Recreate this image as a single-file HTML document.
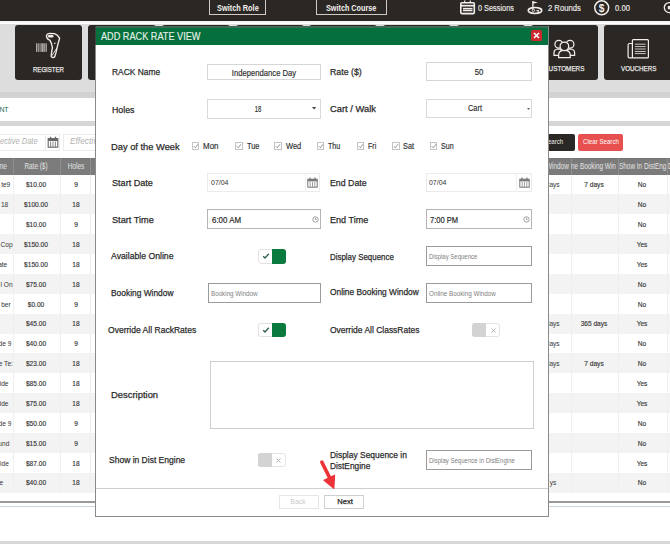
<!DOCTYPE html>
<html><head><meta charset="utf-8"><style>
html,body{margin:0;padding:0;}
body{width:670px;height:544px;overflow:hidden;position:relative;background:#fff;font-family:"Liberation Sans", sans-serif;}
.r{position:absolute;}
.t{position:absolute;white-space:nowrap;line-height:1;}
.s{-webkit-text-stroke:0.25px currentColor;}
</style></head><body>
<div class="r" style="left:0px;top:0px;width:670px;height:544px;background:#fff"></div>
<div class="r" style="left:0px;top:0px;width:670px;height:20.5px;background:#2b2725"></div>
<div class="r" style="left:0px;top:20.6px;width:670px;height:2.6px;background:#f6f6f6"></div>
<div class="r" style="left:0px;top:23.5px;width:670px;height:68px;background:#dddddd"></div>
<div class="r" style="left:0px;top:91.5px;width:670px;height:6.2px;background:#d2d2d2"></div>
<div class="r" style="left:209px;top:-0.6px;width:57.3px;height:15.8px;border:1px solid #cfcac4;box-sizing:border-box"></div>
<div class="t" style="left:216.70px;top:3.52px;font-size:8.6px;color:#f4f2ee;font-weight:bold;transform:scaleX(0.8576);transform-origin:0 0;">Switch Role</div>
<div class="r" style="left:316px;top:-0.6px;width:70.6px;height:15.8px;border:1px solid #cfcac4;box-sizing:border-box"></div>
<div class="t" style="left:326.00px;top:3.52px;font-size:8.6px;color:#f4f2ee;font-weight:bold;transform:scaleX(0.8421);transform-origin:0 0;">Switch Course</div>
<div class="t" style="left:478.00px;top:4.19px;font-size:8.4px;color:#eeebe7;font-weight:normal;transform:scaleX(0.8761);transform-origin:0 0;-webkit-text-stroke:0.15px currentColor">0 Sessions</div>
<div class="t" style="left:547.70px;top:4.19px;font-size:8.4px;color:#eeebe7;font-weight:normal;transform:scaleX(0.9122);transform-origin:0 0;-webkit-text-stroke:0.15px currentColor">2 Rounds</div>
<div class="t" style="left:615.00px;top:4.19px;font-size:8.4px;color:#eeebe7;font-weight:normal;transform:scaleX(0.9175);transform-origin:0 0;-webkit-text-stroke:0.15px currentColor">0.00</div>
<div class="r" style="left:14.6px;top:24.6px;width:67.8px;height:55.9px;background:#2b2725;border-radius:3px"></div>
<div class="r" style="left:88.32px;top:24.6px;width:67.8px;height:55.9px;background:#2b2725;border-radius:3px"></div>
<div class="r" style="left:162.04px;top:24.6px;width:67.8px;height:55.9px;background:#2b2725;border-radius:3px"></div>
<div class="r" style="left:235.76px;top:24.6px;width:67.8px;height:55.9px;background:#2b2725;border-radius:3px"></div>
<div class="r" style="left:309.48px;top:24.6px;width:67.8px;height:55.9px;background:#2b2725;border-radius:3px"></div>
<div class="r" style="left:383.2px;top:24.6px;width:67.8px;height:55.9px;background:#2b2725;border-radius:3px"></div>
<div class="r" style="left:456.92px;top:24.6px;width:67.8px;height:55.9px;background:#2b2725;border-radius:3px"></div>
<div class="r" style="left:530.64px;top:24.6px;width:67.8px;height:55.9px;background:#2b2725;border-radius:3px"></div>
<div class="r" style="left:604.36px;top:24.6px;width:67.8px;height:55.9px;background:#2b2725;border-radius:3px"></div>
<div class="t" style="left:32.70px;top:65.51px;font-size:7.2px;color:#e8e6e3;font-weight:normal;transform:scaleX(0.8423);transform-origin:0 0;-webkit-text-stroke:0.25px currentColor">REGISTER</div>
<div class="t" style="left:544.20px;top:65.41px;font-size:7.2px;color:#e8e6e3;font-weight:normal;transform:scaleX(0.8829);transform-origin:0 0;-webkit-text-stroke:0.25px currentColor">CUSTOMERS</div>
<div class="t" style="left:620.60px;top:65.41px;font-size:7.2px;color:#e8e6e3;font-weight:normal;transform:scaleX(0.8700);transform-origin:0 0;-webkit-text-stroke:0.25px currentColor">VOUCHERS</div>
<svg class="r" style="left:30px;top:30px" width="36" height="30" viewBox="0 0 36 30"><path d="M16.5 6.6C16.3 5 16.8 3.8 19.8 3.4L24.3 3.6C26 4 28.6 6.2 29.6 8.3L28.2 13.2L27 18.2L25.8 23.4L24.6 27C23.5 27.8 22 27.8 21.2 26.2L21.6 22.4L22.4 17.6L21.4 13.4L20 10.4L17.6 8.9Z" fill="none" stroke="#f2efeb" stroke-width="1.35" stroke-linejoin="round"/><rect x="17.9" y="4.9" width="5.6" height="2.5" rx="1.2" fill="#f2efeb"/><circle cx="24.8" cy="13.2" r="0.8" fill="#f2efeb"/><path d="M27 17.8L22 25.6" stroke="#f2efeb" stroke-width="0.9"/><rect x="6.3" y="13.3" width="1.0" height="8.6" fill="#e4e0db"/><rect x="8.3" y="13.3" width="0.6" height="8.6" fill="#e4e0db"/><rect x="9.7" y="13.3" width="0.7" height="8.6" fill="#e4e0db"/><rect x="11.0" y="13.3" width="0.5" height="8.6" fill="#e4e0db"/><rect x="12.1" y="13.3" width="0.7" height="8.6" fill="#e4e0db"/><rect x="13.3" y="13.3" width="0.5" height="8.6" fill="#e4e0db"/><rect x="14.4" y="13.3" width="0.7" height="8.6" fill="#e4e0db"/><rect x="15.7" y="13.3" width="0.9" height="8.6" fill="#e4e0db"/></svg>
<svg class="r" style="left:548px;top:34px" width="30" height="26" viewBox="0 0 30 26"><g fill="#2b2725" stroke="#f2efeb" stroke-width="1.25"><path d="M6 21.4V18.6C6 16.4 7.5 15.2 10 15H13V21.4Z"/><path d="M26.6 21.4V18.6C26.6 16.4 25.1 15.2 22.6 15H19.6V21.4Z"/><circle cx="10.8" cy="10.2" r="3.9"/><circle cx="22" cy="10.2" r="3.9"/><path d="M10.6 23.6V20.8C10.6 17.8 12.8 16.3 16.4 16.3C20 16.3 22.2 17.8 22.2 20.8V23.6Z"/><circle cx="16.4" cy="12.3" r="4.3"/></g></svg>
<svg class="r" style="left:622px;top:34px" width="30" height="26" viewBox="0 0 30 26"><g fill="none" stroke="#f2efeb" stroke-width="1.2"><path d="M10.4 9.5H7.5C6.4 9.5 6.1 10.2 6.1 11V22.6C6.1 23.5 6.6 23.9 7.5 23.9H10.4"/><rect x="10.4" y="5.6" width="16" height="18.3" rx="1"/></g><path d="M12.9 10.2H23.7M12.9 12.6H23.7M12.9 15H23.7M12.9 17.5H23.7M12.9 19.6H23.7" stroke="#dcd8d3" stroke-width="0.9"/></svg>
<svg class="r" style="left:455px;top:0px" width="25" height="18" viewBox="0 0 25 18"><rect x="5.8" y="2.8" width="13.5" height="10.8" rx="1" fill="none" stroke="#f2efeb" stroke-width="1.6"/><path d="M6 5.7H19" stroke="#f2efeb" stroke-width="1.7"/><path d="M8 8.6H17.5M8 10.4H17.5" stroke="#f2efeb" stroke-width="1.1"/><path d="M8 6.9H17.5M8 11.8H17.5" stroke="#8d8985" stroke-width="0.7"/><path d="M9.7 0.5V2.4M15.3 0.5V2.4" stroke="#f2efeb" stroke-width="1.2"/></svg>
<svg class="r" style="left:524px;top:0px" width="22" height="18" viewBox="0 0 22 18"><ellipse cx="11" cy="10.5" rx="6.8" ry="2.9" fill="none" stroke="#f2efeb" stroke-width="1.5"/><path d="M8.9 1V9.6" stroke="#f2efeb" stroke-width="1.3"/><path d="M8.9 1.2L13.9 2.4L8.9 3.8Z" fill="#f2efeb"/><circle cx="9.4" cy="10.4" r="1.2" fill="none" stroke="#f2efeb" stroke-width="0.9"/><path d="M12 11.3C12.6 10.2 14 10.2 14.6 11" fill="none" stroke="#f2efeb" stroke-width="0.9"/><circle cx="14.2" cy="10.9" r="0.9" fill="#f2efeb"/></svg>
<svg class="r" style="left:590px;top:0px" width="24" height="18" viewBox="0 0 24 18"><circle cx="11.7" cy="7.8" r="6.95" fill="none" stroke="#f2efeb" stroke-width="1.5"/><text x="11.7" y="11.6" font-family="Liberation Sans" font-weight="bold" font-size="10.2" text-anchor="middle" fill="#f2efeb">$</text></svg>
<svg class="r" style="left:650px;top:0px" width="20" height="18" viewBox="0 0 20 18"><circle cx="19.3" cy="7.6" r="5" fill="none" stroke="#f2efeb" stroke-width="1.3"/><rect x="17.8" y="6" width="3" height="3.2" fill="#f2efeb"/></svg>
<div class="r" style="left:0px;top:97.7px;width:670px;height:23.3px;background:#fff"></div>
<div class="t" style="left:-0.50px;top:106.27px;font-size:7px;color:#24684c;font-weight:normal;letter-spacing:-0.3px">NT</div>
<div class="r" style="left:0px;top:120.7px;width:670px;height:5.3px;background:#d6d6d6"></div>
<div class="r" style="left:-30px;top:134px;width:90.4px;height:17px;border:1px solid #ececec;box-sizing:border-box;background:#fff"></div>
<div class="r" style="left:44.6px;top:134px;width:0.8px;height:17px;background:#ececec"></div>
<svg class="r" style="left:47px;top:136px" width="12" height="12" viewBox="0 0 12 12"><rect x="1.2" y="2.6" width="9.6" height="8.6" fill="none" stroke="#666" stroke-width="1.1"/><rect x="1.2" y="2.6" width="9.6" height="2.4" fill="#666"/><path d="M3.5 0.8V3.4M8.5 0.8V3.4" stroke="#666" stroke-width="1.3"/><path d="M3.6 5.5V11M6 5.5V11M8.4 5.5V11" stroke="#777" stroke-width="0.9"/></svg>
<div class="r" style="left:63.4px;top:134px;width:40px;height:17px;border:1px solid #ececec;box-sizing:border-box;background:#fff"></div>
<div class="t" style="left:-0.50px;top:138.26px;font-size:8.2px;color:#b0b0b0;font-weight:normal;transform:scaleX(0.9191);transform-origin:0 0;font-style:italic">ective Date</div>
<div class="t" style="left:70.20px;top:138.26px;font-size:8.2px;color:#b0b0b0;font-weight:normal;transform:scaleX(1.0176);transform-origin:0 0;font-style:italic">Effective</div>
<div class="r" style="left:535px;top:134px;width:40px;height:16.8px;background:#2b2725;border-radius:2px"></div>
<div class="t" style="left:547.60px;top:139.01px;font-size:6.6px;color:#f0f0f0;font-weight:normal;transform:scaleX(0.9086);transform-origin:0 0;">earch</div>
<div class="r" style="left:578.2px;top:134px;width:45.2px;height:16.8px;background:#e8504f;border-radius:2px"></div>
<div class="t" style="left:582.70px;top:138.84px;font-size:6.8px;color:#fff;font-weight:normal;transform:scaleX(0.9046);transform-origin:0 0;">Clear Search</div>
<div class="r" style="left:0px;top:157.6px;width:670px;height:17px;background:#7b7b7b"></div>
<div class="r" style="left:0px;top:157.6px;width:670px;height:0.8px;background:#6f757a"></div>
<div class="r" style="left:12.7px;top:157.6px;width:1px;height:17px;background:#8e8e8e"></div>
<div class="r" style="left:59.7px;top:157.6px;width:1px;height:17px;background:#8e8e8e"></div>
<div class="r" style="left:90.3px;top:157.6px;width:1px;height:17px;background:#8e8e8e"></div>
<div class="r" style="left:570.7px;top:157.6px;width:1px;height:17px;background:#8e8e8e"></div>
<div class="r" style="left:618.1px;top:157.6px;width:1px;height:17px;background:#8e8e8e"></div>
<div class="r" style="left:667.2px;top:157.6px;width:1px;height:17px;background:#8e8e8e"></div>
<div class="t" style="left:-1.92px;top:162.86px;font-size:8.2px;color:#e4e4e4;font-weight:normal;transform:scaleX(0.7830);transform-origin:0 0;">me</div>
<div class="t" style="left:-163.80px;width:400px;text-align:center;top:162.86px;font-size:8.2px;color:#e4e4e4;font-weight:normal;transform:scaleX(0.7832);transform-origin:50% 0;">Rate ($)</div>
<div class="t" style="left:-124.45px;width:400px;text-align:center;top:162.86px;font-size:8.2px;color:#e4e4e4;font-weight:normal;transform:scaleX(0.7966);transform-origin:50% 0;">Holes</div>
<div class="t" style="left:546.46px;top:162.86px;font-size:8.2px;color:#e4e4e4;font-weight:normal;transform:scaleX(0.7830);transform-origin:0 0;">Window</div>
<div class="t" style="left:571.10px;top:162.86px;font-size:8.2px;color:#e4e4e4;font-weight:normal;transform:scaleX(0.7830);transform-origin:0 0;">ne Booking Win</div>
<div class="t" style="left:618.70px;top:162.86px;font-size:8.2px;color:#e4e4e4;font-weight:normal;transform:scaleX(0.7830);transform-origin:0 0;">Show In DistEng</div>
<div class="t" style="left:668.00px;top:162.86px;font-size:8.2px;color:#e4e4e4;font-weight:normal;transform:scaleX(0.7830);transform-origin:0 0;">D</div>
<div class="r" style="left:0px;top:174.6px;width:670px;height:19.875px;background:#ffffff"></div>
<div class="r" style="left:12.7px;top:174.6px;width:1px;height:19.875px;background:#efefef"></div>
<div class="r" style="left:59.7px;top:174.6px;width:1px;height:19.875px;background:#efefef"></div>
<div class="r" style="left:90.3px;top:174.6px;width:1px;height:19.875px;background:#efefef"></div>
<div class="r" style="left:570.7px;top:174.6px;width:1px;height:19.875px;background:#efefef"></div>
<div class="r" style="left:618.1px;top:174.6px;width:1px;height:19.875px;background:#efefef"></div>
<div class="r" style="left:667.2px;top:174.6px;width:1px;height:19.875px;background:#efefef"></div>
<div class="t" style="right:660.1px;top:181.34px;font-size:7.4px;color:#333;text-align:right;transform:scaleX(0.89);transform-origin:100% 0">te9</div>
<div class="t" style="left:-163.80px;width:400px;text-align:center;top:181.34px;font-size:7.4px;color:#333;font-weight:normal;transform:scaleX(0.8900);transform-origin:50% 0;-webkit-text-stroke:0.15px currentColor">$10.00</div>
<div class="t" style="left:-124.50px;width:400px;text-align:center;top:181.34px;font-size:7.4px;color:#333;font-weight:normal;transform:scaleX(0.8900);transform-origin:50% 0;-webkit-text-stroke:0.15px currentColor">9</div>
<div class="t" style="right:110.20000000000005px;top:181.34px;font-size:7.4px;color:#333;transform:scaleX(0.89);transform-origin:100% 0">days</div>
<div class="t" style="left:394.40px;width:400px;text-align:center;top:181.34px;font-size:7.4px;color:#333;font-weight:normal;transform:scaleX(0.8900);transform-origin:50% 0;-webkit-text-stroke:0.15px currentColor">7 days</div>
<div class="t" style="left:442.20px;width:400px;text-align:center;top:181.34px;font-size:7.4px;color:#333;font-weight:normal;transform:scaleX(0.8900);transform-origin:50% 0;-webkit-text-stroke:0.15px currentColor">No</div>
<div class="r" style="left:0px;top:194.47px;width:670px;height:19.875px;background:#f3f3f3"></div>
<div class="r" style="left:12.7px;top:194.47px;width:1px;height:19.875px;background:#efefef"></div>
<div class="r" style="left:59.7px;top:194.47px;width:1px;height:19.875px;background:#efefef"></div>
<div class="r" style="left:90.3px;top:194.47px;width:1px;height:19.875px;background:#efefef"></div>
<div class="r" style="left:570.7px;top:194.47px;width:1px;height:19.875px;background:#efefef"></div>
<div class="r" style="left:618.1px;top:194.47px;width:1px;height:19.875px;background:#efefef"></div>
<div class="r" style="left:667.2px;top:194.47px;width:1px;height:19.875px;background:#efefef"></div>
<div class="t" style="right:662.1px;top:201.21px;font-size:7.4px;color:#333;text-align:right;transform:scaleX(0.89);transform-origin:100% 0">18</div>
<div class="t" style="left:-163.80px;width:400px;text-align:center;top:201.21px;font-size:7.4px;color:#333;font-weight:normal;transform:scaleX(0.8900);transform-origin:50% 0;-webkit-text-stroke:0.15px currentColor">$100.00</div>
<div class="t" style="left:-124.50px;width:400px;text-align:center;top:201.21px;font-size:7.4px;color:#333;font-weight:normal;transform:scaleX(0.8900);transform-origin:50% 0;-webkit-text-stroke:0.15px currentColor">18</div>
<div class="t" style="left:442.20px;width:400px;text-align:center;top:201.21px;font-size:7.4px;color:#333;font-weight:normal;transform:scaleX(0.8900);transform-origin:50% 0;-webkit-text-stroke:0.15px currentColor">No</div>
<div class="r" style="left:0px;top:214.35px;width:670px;height:19.875px;background:#ffffff"></div>
<div class="r" style="left:12.7px;top:214.35px;width:1px;height:19.875px;background:#efefef"></div>
<div class="r" style="left:59.7px;top:214.35px;width:1px;height:19.875px;background:#efefef"></div>
<div class="r" style="left:90.3px;top:214.35px;width:1px;height:19.875px;background:#efefef"></div>
<div class="r" style="left:570.7px;top:214.35px;width:1px;height:19.875px;background:#efefef"></div>
<div class="r" style="left:618.1px;top:214.35px;width:1px;height:19.875px;background:#efefef"></div>
<div class="r" style="left:667.2px;top:214.35px;width:1px;height:19.875px;background:#efefef"></div>
<div class="t" style="left:-163.80px;width:400px;text-align:center;top:221.09px;font-size:7.4px;color:#333;font-weight:normal;transform:scaleX(0.8900);transform-origin:50% 0;-webkit-text-stroke:0.15px currentColor">$10.00</div>
<div class="t" style="left:-124.50px;width:400px;text-align:center;top:221.09px;font-size:7.4px;color:#333;font-weight:normal;transform:scaleX(0.8900);transform-origin:50% 0;-webkit-text-stroke:0.15px currentColor">9</div>
<div class="t" style="left:442.20px;width:400px;text-align:center;top:221.09px;font-size:7.4px;color:#333;font-weight:normal;transform:scaleX(0.8900);transform-origin:50% 0;-webkit-text-stroke:0.15px currentColor">No</div>
<div class="r" style="left:0px;top:234.22px;width:670px;height:19.875px;background:#f3f3f3"></div>
<div class="r" style="left:12.7px;top:234.22px;width:1px;height:19.875px;background:#efefef"></div>
<div class="r" style="left:59.7px;top:234.22px;width:1px;height:19.875px;background:#efefef"></div>
<div class="r" style="left:90.3px;top:234.22px;width:1px;height:19.875px;background:#efefef"></div>
<div class="r" style="left:570.7px;top:234.22px;width:1px;height:19.875px;background:#efefef"></div>
<div class="r" style="left:618.1px;top:234.22px;width:1px;height:19.875px;background:#efefef"></div>
<div class="r" style="left:667.2px;top:234.22px;width:1px;height:19.875px;background:#efefef"></div>
<div class="t" style="right:657.4px;top:240.96px;font-size:7.4px;color:#333;text-align:right;transform:scaleX(0.89);transform-origin:100% 0">Cop</div>
<div class="t" style="left:-163.80px;width:400px;text-align:center;top:240.96px;font-size:7.4px;color:#333;font-weight:normal;transform:scaleX(0.8900);transform-origin:50% 0;-webkit-text-stroke:0.15px currentColor">$150.00</div>
<div class="t" style="left:-124.50px;width:400px;text-align:center;top:240.96px;font-size:7.4px;color:#333;font-weight:normal;transform:scaleX(0.8900);transform-origin:50% 0;-webkit-text-stroke:0.15px currentColor">18</div>
<div class="t" style="left:442.20px;width:400px;text-align:center;top:240.96px;font-size:7.4px;color:#333;font-weight:normal;transform:scaleX(0.8900);transform-origin:50% 0;-webkit-text-stroke:0.15px currentColor">Yes</div>
<div class="r" style="left:0px;top:254.1px;width:670px;height:19.875px;background:#ffffff"></div>
<div class="r" style="left:12.7px;top:254.1px;width:1px;height:19.875px;background:#efefef"></div>
<div class="r" style="left:59.7px;top:254.1px;width:1px;height:19.875px;background:#efefef"></div>
<div class="r" style="left:90.3px;top:254.1px;width:1px;height:19.875px;background:#efefef"></div>
<div class="r" style="left:570.7px;top:254.1px;width:1px;height:19.875px;background:#efefef"></div>
<div class="r" style="left:618.1px;top:254.1px;width:1px;height:19.875px;background:#efefef"></div>
<div class="r" style="left:667.2px;top:254.1px;width:1px;height:19.875px;background:#efefef"></div>
<div class="t" style="right:662.6px;top:260.84px;font-size:7.4px;color:#333;text-align:right;transform:scaleX(0.89);transform-origin:100% 0">ate</div>
<div class="t" style="left:-163.80px;width:400px;text-align:center;top:260.84px;font-size:7.4px;color:#333;font-weight:normal;transform:scaleX(0.8900);transform-origin:50% 0;-webkit-text-stroke:0.15px currentColor">$150.00</div>
<div class="t" style="left:-124.50px;width:400px;text-align:center;top:260.84px;font-size:7.4px;color:#333;font-weight:normal;transform:scaleX(0.8900);transform-origin:50% 0;-webkit-text-stroke:0.15px currentColor">18</div>
<div class="t" style="left:442.20px;width:400px;text-align:center;top:260.84px;font-size:7.4px;color:#333;font-weight:normal;transform:scaleX(0.8900);transform-origin:50% 0;-webkit-text-stroke:0.15px currentColor">Yes</div>
<div class="r" style="left:0px;top:273.98px;width:670px;height:19.875px;background:#f3f3f3"></div>
<div class="r" style="left:12.7px;top:273.98px;width:1px;height:19.875px;background:#efefef"></div>
<div class="r" style="left:59.7px;top:273.98px;width:1px;height:19.875px;background:#efefef"></div>
<div class="r" style="left:90.3px;top:273.98px;width:1px;height:19.875px;background:#efefef"></div>
<div class="r" style="left:570.7px;top:273.98px;width:1px;height:19.875px;background:#efefef"></div>
<div class="r" style="left:618.1px;top:273.98px;width:1px;height:19.875px;background:#efefef"></div>
<div class="r" style="left:667.2px;top:273.98px;width:1px;height:19.875px;background:#efefef"></div>
<div class="t" style="right:657.6px;top:280.71px;font-size:7.4px;color:#333;text-align:right;transform:scaleX(0.89);transform-origin:100% 0">l On</div>
<div class="t" style="left:-163.80px;width:400px;text-align:center;top:280.71px;font-size:7.4px;color:#333;font-weight:normal;transform:scaleX(0.8900);transform-origin:50% 0;-webkit-text-stroke:0.15px currentColor">$75.00</div>
<div class="t" style="left:-124.50px;width:400px;text-align:center;top:280.71px;font-size:7.4px;color:#333;font-weight:normal;transform:scaleX(0.8900);transform-origin:50% 0;-webkit-text-stroke:0.15px currentColor">18</div>
<div class="t" style="left:442.20px;width:400px;text-align:center;top:280.71px;font-size:7.4px;color:#333;font-weight:normal;transform:scaleX(0.8900);transform-origin:50% 0;-webkit-text-stroke:0.15px currentColor">No</div>
<div class="r" style="left:0px;top:293.85px;width:670px;height:19.875px;background:#ffffff"></div>
<div class="r" style="left:12.7px;top:293.85px;width:1px;height:19.875px;background:#efefef"></div>
<div class="r" style="left:59.7px;top:293.85px;width:1px;height:19.875px;background:#efefef"></div>
<div class="r" style="left:90.3px;top:293.85px;width:1px;height:19.875px;background:#efefef"></div>
<div class="r" style="left:570.7px;top:293.85px;width:1px;height:19.875px;background:#efefef"></div>
<div class="r" style="left:618.1px;top:293.85px;width:1px;height:19.875px;background:#efefef"></div>
<div class="r" style="left:667.2px;top:293.85px;width:1px;height:19.875px;background:#efefef"></div>
<div class="t" style="right:659.3px;top:300.59px;font-size:7.4px;color:#333;text-align:right;transform:scaleX(0.89);transform-origin:100% 0">ber</div>
<div class="t" style="left:-163.80px;width:400px;text-align:center;top:300.59px;font-size:7.4px;color:#333;font-weight:normal;transform:scaleX(0.8900);transform-origin:50% 0;-webkit-text-stroke:0.15px currentColor">$0.00</div>
<div class="t" style="left:-124.50px;width:400px;text-align:center;top:300.59px;font-size:7.4px;color:#333;font-weight:normal;transform:scaleX(0.8900);transform-origin:50% 0;-webkit-text-stroke:0.15px currentColor">9</div>
<div class="t" style="left:442.20px;width:400px;text-align:center;top:300.59px;font-size:7.4px;color:#333;font-weight:normal;transform:scaleX(0.8900);transform-origin:50% 0;-webkit-text-stroke:0.15px currentColor">No</div>
<div class="r" style="left:0px;top:313.73px;width:670px;height:19.875px;background:#f3f3f3"></div>
<div class="r" style="left:12.7px;top:313.73px;width:1px;height:19.875px;background:#efefef"></div>
<div class="r" style="left:59.7px;top:313.73px;width:1px;height:19.875px;background:#efefef"></div>
<div class="r" style="left:90.3px;top:313.73px;width:1px;height:19.875px;background:#efefef"></div>
<div class="r" style="left:570.7px;top:313.73px;width:1px;height:19.875px;background:#efefef"></div>
<div class="r" style="left:618.1px;top:313.73px;width:1px;height:19.875px;background:#efefef"></div>
<div class="r" style="left:667.2px;top:313.73px;width:1px;height:19.875px;background:#efefef"></div>
<div class="t" style="left:-163.80px;width:400px;text-align:center;top:320.46px;font-size:7.4px;color:#333;font-weight:normal;transform:scaleX(0.8900);transform-origin:50% 0;-webkit-text-stroke:0.15px currentColor">$45.00</div>
<div class="t" style="left:-124.50px;width:400px;text-align:center;top:320.46px;font-size:7.4px;color:#333;font-weight:normal;transform:scaleX(0.8900);transform-origin:50% 0;-webkit-text-stroke:0.15px currentColor">18</div>
<div class="t" style="right:110.20000000000005px;top:320.46px;font-size:7.4px;color:#333;transform:scaleX(0.89);transform-origin:100% 0">days</div>
<div class="t" style="left:394.40px;width:400px;text-align:center;top:320.46px;font-size:7.4px;color:#333;font-weight:normal;transform:scaleX(0.8900);transform-origin:50% 0;-webkit-text-stroke:0.15px currentColor">365 days</div>
<div class="t" style="left:442.20px;width:400px;text-align:center;top:320.46px;font-size:7.4px;color:#333;font-weight:normal;transform:scaleX(0.8900);transform-origin:50% 0;-webkit-text-stroke:0.15px currentColor">Yes</div>
<div class="r" style="left:0px;top:333.6px;width:670px;height:19.875px;background:#ffffff"></div>
<div class="r" style="left:12.7px;top:333.6px;width:1px;height:19.875px;background:#efefef"></div>
<div class="r" style="left:59.7px;top:333.6px;width:1px;height:19.875px;background:#efefef"></div>
<div class="r" style="left:90.3px;top:333.6px;width:1px;height:19.875px;background:#efefef"></div>
<div class="r" style="left:570.7px;top:333.6px;width:1px;height:19.875px;background:#efefef"></div>
<div class="r" style="left:618.1px;top:333.6px;width:1px;height:19.875px;background:#efefef"></div>
<div class="r" style="left:667.2px;top:333.6px;width:1px;height:19.875px;background:#efefef"></div>
<div class="t" style="right:658.2px;top:340.34px;font-size:7.4px;color:#333;text-align:right;transform:scaleX(0.89);transform-origin:100% 0">de 9</div>
<div class="t" style="left:-163.80px;width:400px;text-align:center;top:340.34px;font-size:7.4px;color:#333;font-weight:normal;transform:scaleX(0.8900);transform-origin:50% 0;-webkit-text-stroke:0.15px currentColor">$40.00</div>
<div class="t" style="left:-124.50px;width:400px;text-align:center;top:340.34px;font-size:7.4px;color:#333;font-weight:normal;transform:scaleX(0.8900);transform-origin:50% 0;-webkit-text-stroke:0.15px currentColor">9</div>
<div class="t" style="right:110.20000000000005px;top:340.34px;font-size:7.4px;color:#333;transform:scaleX(0.89);transform-origin:100% 0">days</div>
<div class="t" style="left:442.20px;width:400px;text-align:center;top:340.34px;font-size:7.4px;color:#333;font-weight:normal;transform:scaleX(0.8900);transform-origin:50% 0;-webkit-text-stroke:0.15px currentColor">No</div>
<div class="r" style="left:0px;top:353.48px;width:670px;height:19.875px;background:#f3f3f3"></div>
<div class="r" style="left:12.7px;top:353.48px;width:1px;height:19.875px;background:#efefef"></div>
<div class="r" style="left:59.7px;top:353.48px;width:1px;height:19.875px;background:#efefef"></div>
<div class="r" style="left:90.3px;top:353.48px;width:1px;height:19.875px;background:#efefef"></div>
<div class="r" style="left:570.7px;top:353.48px;width:1px;height:19.875px;background:#efefef"></div>
<div class="r" style="left:618.1px;top:353.48px;width:1px;height:19.875px;background:#efefef"></div>
<div class="r" style="left:667.2px;top:353.48px;width:1px;height:19.875px;background:#efefef"></div>
<div class="t" style="right:657.4px;top:360.21px;font-size:7.4px;color:#333;text-align:right;transform:scaleX(0.89);transform-origin:100% 0">e Te:</div>
<div class="t" style="left:-163.80px;width:400px;text-align:center;top:360.21px;font-size:7.4px;color:#333;font-weight:normal;transform:scaleX(0.8900);transform-origin:50% 0;-webkit-text-stroke:0.15px currentColor">$23.00</div>
<div class="t" style="left:-124.50px;width:400px;text-align:center;top:360.21px;font-size:7.4px;color:#333;font-weight:normal;transform:scaleX(0.8900);transform-origin:50% 0;-webkit-text-stroke:0.15px currentColor">18</div>
<div class="t" style="right:110.20000000000005px;top:360.21px;font-size:7.4px;color:#333;transform:scaleX(0.89);transform-origin:100% 0">days</div>
<div class="t" style="left:394.40px;width:400px;text-align:center;top:360.21px;font-size:7.4px;color:#333;font-weight:normal;transform:scaleX(0.8900);transform-origin:50% 0;-webkit-text-stroke:0.15px currentColor">7 days</div>
<div class="t" style="left:442.20px;width:400px;text-align:center;top:360.21px;font-size:7.4px;color:#333;font-weight:normal;transform:scaleX(0.8900);transform-origin:50% 0;-webkit-text-stroke:0.15px currentColor">No</div>
<div class="r" style="left:0px;top:373.35px;width:670px;height:19.875px;background:#ffffff"></div>
<div class="r" style="left:12.7px;top:373.35px;width:1px;height:19.875px;background:#efefef"></div>
<div class="r" style="left:59.7px;top:373.35px;width:1px;height:19.875px;background:#efefef"></div>
<div class="r" style="left:90.3px;top:373.35px;width:1px;height:19.875px;background:#efefef"></div>
<div class="r" style="left:570.7px;top:373.35px;width:1px;height:19.875px;background:#efefef"></div>
<div class="r" style="left:618.1px;top:373.35px;width:1px;height:19.875px;background:#efefef"></div>
<div class="r" style="left:667.2px;top:373.35px;width:1px;height:19.875px;background:#efefef"></div>
<div class="t" style="right:661.2px;top:380.09px;font-size:7.4px;color:#333;text-align:right;transform:scaleX(0.89);transform-origin:100% 0">lide</div>
<div class="t" style="left:-163.80px;width:400px;text-align:center;top:380.09px;font-size:7.4px;color:#333;font-weight:normal;transform:scaleX(0.8900);transform-origin:50% 0;-webkit-text-stroke:0.15px currentColor">$85.00</div>
<div class="t" style="left:-124.50px;width:400px;text-align:center;top:380.09px;font-size:7.4px;color:#333;font-weight:normal;transform:scaleX(0.8900);transform-origin:50% 0;-webkit-text-stroke:0.15px currentColor">18</div>
<div class="t" style="left:442.20px;width:400px;text-align:center;top:380.09px;font-size:7.4px;color:#333;font-weight:normal;transform:scaleX(0.8900);transform-origin:50% 0;-webkit-text-stroke:0.15px currentColor">Yes</div>
<div class="r" style="left:0px;top:393.23px;width:670px;height:19.875px;background:#f3f3f3"></div>
<div class="r" style="left:12.7px;top:393.23px;width:1px;height:19.875px;background:#efefef"></div>
<div class="r" style="left:59.7px;top:393.23px;width:1px;height:19.875px;background:#efefef"></div>
<div class="r" style="left:90.3px;top:393.23px;width:1px;height:19.875px;background:#efefef"></div>
<div class="r" style="left:570.7px;top:393.23px;width:1px;height:19.875px;background:#efefef"></div>
<div class="r" style="left:618.1px;top:393.23px;width:1px;height:19.875px;background:#efefef"></div>
<div class="r" style="left:667.2px;top:393.23px;width:1px;height:19.875px;background:#efefef"></div>
<div class="t" style="right:661.4px;top:399.96px;font-size:7.4px;color:#333;text-align:right;transform:scaleX(0.89);transform-origin:100% 0">lide</div>
<div class="t" style="left:-163.80px;width:400px;text-align:center;top:399.96px;font-size:7.4px;color:#333;font-weight:normal;transform:scaleX(0.8900);transform-origin:50% 0;-webkit-text-stroke:0.15px currentColor">$75.00</div>
<div class="t" style="left:-124.50px;width:400px;text-align:center;top:399.96px;font-size:7.4px;color:#333;font-weight:normal;transform:scaleX(0.8900);transform-origin:50% 0;-webkit-text-stroke:0.15px currentColor">18</div>
<div class="t" style="left:442.20px;width:400px;text-align:center;top:399.96px;font-size:7.4px;color:#333;font-weight:normal;transform:scaleX(0.8900);transform-origin:50% 0;-webkit-text-stroke:0.15px currentColor">Yes</div>
<div class="r" style="left:0px;top:413.1px;width:670px;height:19.875px;background:#ffffff"></div>
<div class="r" style="left:12.7px;top:413.1px;width:1px;height:19.875px;background:#efefef"></div>
<div class="r" style="left:59.7px;top:413.1px;width:1px;height:19.875px;background:#efefef"></div>
<div class="r" style="left:90.3px;top:413.1px;width:1px;height:19.875px;background:#efefef"></div>
<div class="r" style="left:570.7px;top:413.1px;width:1px;height:19.875px;background:#efefef"></div>
<div class="r" style="left:618.1px;top:413.1px;width:1px;height:19.875px;background:#efefef"></div>
<div class="r" style="left:667.2px;top:413.1px;width:1px;height:19.875px;background:#efefef"></div>
<div class="t" style="right:658.6px;top:419.84px;font-size:7.4px;color:#333;text-align:right;transform:scaleX(0.89);transform-origin:100% 0">de 9</div>
<div class="t" style="left:-163.80px;width:400px;text-align:center;top:419.84px;font-size:7.4px;color:#333;font-weight:normal;transform:scaleX(0.8900);transform-origin:50% 0;-webkit-text-stroke:0.15px currentColor">$50.00</div>
<div class="t" style="left:-124.50px;width:400px;text-align:center;top:419.84px;font-size:7.4px;color:#333;font-weight:normal;transform:scaleX(0.8900);transform-origin:50% 0;-webkit-text-stroke:0.15px currentColor">9</div>
<div class="t" style="left:442.20px;width:400px;text-align:center;top:419.84px;font-size:7.4px;color:#333;font-weight:normal;transform:scaleX(0.8900);transform-origin:50% 0;-webkit-text-stroke:0.15px currentColor">No</div>
<div class="r" style="left:0px;top:432.98px;width:670px;height:19.875px;background:#f3f3f3"></div>
<div class="r" style="left:12.7px;top:432.98px;width:1px;height:19.875px;background:#efefef"></div>
<div class="r" style="left:59.7px;top:432.98px;width:1px;height:19.875px;background:#efefef"></div>
<div class="r" style="left:90.3px;top:432.98px;width:1px;height:19.875px;background:#efefef"></div>
<div class="r" style="left:570.7px;top:432.98px;width:1px;height:19.875px;background:#efefef"></div>
<div class="r" style="left:618.1px;top:432.98px;width:1px;height:19.875px;background:#efefef"></div>
<div class="r" style="left:667.2px;top:432.98px;width:1px;height:19.875px;background:#efefef"></div>
<div class="t" style="right:660.4px;top:439.71px;font-size:7.4px;color:#333;text-align:right;transform:scaleX(0.89);transform-origin:100% 0">und</div>
<div class="t" style="left:-163.80px;width:400px;text-align:center;top:439.71px;font-size:7.4px;color:#333;font-weight:normal;transform:scaleX(0.8900);transform-origin:50% 0;-webkit-text-stroke:0.15px currentColor">$15.00</div>
<div class="t" style="left:-124.50px;width:400px;text-align:center;top:439.71px;font-size:7.4px;color:#333;font-weight:normal;transform:scaleX(0.8900);transform-origin:50% 0;-webkit-text-stroke:0.15px currentColor">9</div>
<div class="t" style="left:442.20px;width:400px;text-align:center;top:439.71px;font-size:7.4px;color:#333;font-weight:normal;transform:scaleX(0.8900);transform-origin:50% 0;-webkit-text-stroke:0.15px currentColor">No</div>
<div class="r" style="left:0px;top:452.85px;width:670px;height:19.875px;background:#ffffff"></div>
<div class="r" style="left:12.7px;top:452.85px;width:1px;height:19.875px;background:#efefef"></div>
<div class="r" style="left:59.7px;top:452.85px;width:1px;height:19.875px;background:#efefef"></div>
<div class="r" style="left:90.3px;top:452.85px;width:1px;height:19.875px;background:#efefef"></div>
<div class="r" style="left:570.7px;top:452.85px;width:1px;height:19.875px;background:#efefef"></div>
<div class="r" style="left:618.1px;top:452.85px;width:1px;height:19.875px;background:#efefef"></div>
<div class="r" style="left:667.2px;top:452.85px;width:1px;height:19.875px;background:#efefef"></div>
<div class="t" style="right:661.5px;top:459.59px;font-size:7.4px;color:#333;text-align:right;transform:scaleX(0.89);transform-origin:100% 0">ide</div>
<div class="t" style="left:-163.80px;width:400px;text-align:center;top:459.59px;font-size:7.4px;color:#333;font-weight:normal;transform:scaleX(0.8900);transform-origin:50% 0;-webkit-text-stroke:0.15px currentColor">$87.00</div>
<div class="t" style="left:-124.50px;width:400px;text-align:center;top:459.59px;font-size:7.4px;color:#333;font-weight:normal;transform:scaleX(0.8900);transform-origin:50% 0;-webkit-text-stroke:0.15px currentColor">18</div>
<div class="t" style="left:442.20px;width:400px;text-align:center;top:459.59px;font-size:7.4px;color:#333;font-weight:normal;transform:scaleX(0.8900);transform-origin:50% 0;-webkit-text-stroke:0.15px currentColor">Yes</div>
<div class="r" style="left:0px;top:472.73px;width:670px;height:19.875px;background:#f3f3f3"></div>
<div class="r" style="left:12.7px;top:472.73px;width:1px;height:19.875px;background:#efefef"></div>
<div class="r" style="left:59.7px;top:472.73px;width:1px;height:19.875px;background:#efefef"></div>
<div class="r" style="left:90.3px;top:472.73px;width:1px;height:19.875px;background:#efefef"></div>
<div class="r" style="left:570.7px;top:472.73px;width:1px;height:19.875px;background:#efefef"></div>
<div class="r" style="left:618.1px;top:472.73px;width:1px;height:19.875px;background:#efefef"></div>
<div class="r" style="left:667.2px;top:472.73px;width:1px;height:19.875px;background:#efefef"></div>
<div class="t" style="right:666.4px;top:479.46px;font-size:7.4px;color:#333;text-align:right;transform:scaleX(0.89);transform-origin:100% 0">e</div>
<div class="t" style="left:-163.80px;width:400px;text-align:center;top:479.46px;font-size:7.4px;color:#333;font-weight:normal;transform:scaleX(0.8900);transform-origin:50% 0;-webkit-text-stroke:0.15px currentColor">$40.00</div>
<div class="t" style="left:-124.50px;width:400px;text-align:center;top:479.46px;font-size:7.4px;color:#333;font-weight:normal;transform:scaleX(0.8900);transform-origin:50% 0;-webkit-text-stroke:0.15px currentColor">18</div>
<div class="t" style="right:114px;top:479.46px;font-size:7.4px;color:#333;transform:scaleX(0.89);transform-origin:100% 0">ys</div>
<div class="t" style="left:442.20px;width:400px;text-align:center;top:479.46px;font-size:7.4px;color:#333;font-weight:normal;transform:scaleX(0.8900);transform-origin:50% 0;-webkit-text-stroke:0.15px currentColor">No</div>
<div class="r" style="left:0px;top:500.5px;width:670px;height:2.2px;background:#9a9a9a"></div>
<div class="r" style="left:0px;top:506.2px;width:670px;height:1px;background:#c9d6e0"></div>
<div class="r" style="left:0px;top:540.5px;width:670px;height:3.5px;background:#d7d7d7"></div>
<div class="r" style="left:94.7px;top:26px;width:454.1px;height:491.09999999999997px;background:#fff;border:1px solid #8a8a8a;border-top:none;box-sizing:border-box"></div>
<div class="r" style="left:95.5px;top:26px;width:452.5px;height:18.6px;background:#05703d"></div>
<div class="r" style="left:94.7px;top:26px;width:1px;height:18.6px;background:#3a4540"></div>
<div class="r" style="left:95.5px;top:26px;width:452.5px;height:1.6px;background:#3f6a55"></div>
<div class="t" style="left:101.30px;top:31.83px;font-size:10px;color:#e4efe6;font-weight:normal;transform:scaleX(0.9143);transform-origin:0 0;-webkit-text-stroke:0.15px currentColor">ADD RACK RATE VIEW</div>
<div class="r" style="left:531px;top:30.4px;width:11px;height:11px;background:#cc2a2f;border-radius:1.5px"></div>
<svg class="r" style="left:531px;top:30.4px" width="11" height="11" viewBox="0 0 11 11"><path d="M3 3L8 8M8 3L3 8" stroke="#fff" stroke-width="1.6"/></svg>
<div class="t" style="left:111.60px;top:67.46px;font-size:9.5px;color:#2a2a2a;font-weight:normal;transform:scaleX(0.8846);transform-origin:0 0;-webkit-text-stroke:0.25px currentColor">RACK Name</div>
<div class="t" style="left:329.80px;top:67.36px;font-size:9.5px;color:#2a2a2a;font-weight:normal;transform:scaleX(0.9267);transform-origin:0 0;-webkit-text-stroke:0.25px currentColor">Rate ($)</div>
<div class="t" style="left:111.60px;top:104.86px;font-size:9.5px;color:#2a2a2a;font-weight:normal;transform:scaleX(0.9223);transform-origin:0 0;-webkit-text-stroke:0.25px currentColor">Holes</div>
<div class="t" style="left:329.80px;top:104.36px;font-size:9.5px;color:#2a2a2a;font-weight:normal;transform:scaleX(0.9845);transform-origin:0 0;-webkit-text-stroke:0.25px currentColor">Cart / Walk</div>
<div class="t" style="left:111.30px;top:141.76px;font-size:9.5px;color:#2a2a2a;font-weight:normal;transform:scaleX(0.9807);transform-origin:0 0;-webkit-text-stroke:0.25px currentColor">Day of the Week</div>
<div class="t" style="left:111.60px;top:178.36px;font-size:9.5px;color:#2a2a2a;font-weight:normal;transform:scaleX(0.9563);transform-origin:0 0;-webkit-text-stroke:0.25px currentColor">Start Date</div>
<div class="t" style="left:329.80px;top:178.36px;font-size:9.5px;color:#2a2a2a;font-weight:normal;transform:scaleX(0.9265);transform-origin:0 0;-webkit-text-stroke:0.25px currentColor">End Date</div>
<div class="t" style="left:111.60px;top:214.56px;font-size:9.5px;color:#2a2a2a;font-weight:normal;transform:scaleX(0.9656);transform-origin:0 0;-webkit-text-stroke:0.25px currentColor">Start Time</div>
<div class="t" style="left:329.80px;top:214.56px;font-size:9.5px;color:#2a2a2a;font-weight:normal;transform:scaleX(0.9519);transform-origin:0 0;-webkit-text-stroke:0.25px currentColor">End Time</div>
<div class="t" style="left:111.40px;top:251.26px;font-size:9.5px;color:#2a2a2a;font-weight:normal;transform:scaleX(0.9127);transform-origin:0 0;-webkit-text-stroke:0.25px currentColor">Available Online</div>
<div class="t" style="left:329.60px;top:251.66px;font-size:9.5px;color:#2a2a2a;font-weight:normal;transform:scaleX(0.8332);transform-origin:0 0;-webkit-text-stroke:0.25px currentColor">Display Sequence</div>
<div class="t" style="left:111.40px;top:288.36px;font-size:9.5px;color:#2a2a2a;font-weight:normal;transform:scaleX(0.8833);transform-origin:0 0;-webkit-text-stroke:0.25px currentColor">Booking Window</div>
<div class="t" style="left:329.60px;top:287.46px;font-size:9.5px;color:#2a2a2a;font-weight:normal;transform:scaleX(0.8804);transform-origin:0 0;-webkit-text-stroke:0.25px currentColor">Online Booking Window</div>
<div class="t" style="left:108.30px;top:325.16px;font-size:9.5px;color:#2a2a2a;font-weight:normal;transform:scaleX(0.8982);transform-origin:0 0;-webkit-text-stroke:0.25px currentColor">Override All RackRates</div>
<div class="t" style="left:329.60px;top:325.16px;font-size:9.5px;color:#2a2a2a;font-weight:normal;transform:scaleX(0.8922);transform-origin:0 0;-webkit-text-stroke:0.25px currentColor">Override All ClassRates</div>
<div class="t" style="left:111.40px;top:390.36px;font-size:9.5px;color:#2a2a2a;font-weight:normal;transform:scaleX(0.9912);transform-origin:0 0;-webkit-text-stroke:0.25px currentColor">Description</div>
<div class="t" style="left:108.80px;top:455.46px;font-size:9.5px;color:#2a2a2a;font-weight:normal;transform:scaleX(0.8951);transform-origin:0 0;-webkit-text-stroke:0.25px currentColor">Show in Dist Engine</div>
<div class="t" style="left:330.20px;top:449.96px;font-size:9.5px;color:#2a2a2a;font-weight:normal;transform:scaleX(0.8879);transform-origin:0 0;-webkit-text-stroke:0.25px currentColor">Display Sequence in</div>
<div class="t" style="left:330.20px;top:461.46px;font-size:9.5px;color:#2a2a2a;font-weight:normal;transform:scaleX(0.8772);transform-origin:0 0;-webkit-text-stroke:0.25px currentColor">DistEngine</div>
<div class="r" style="left:207.4px;top:63.7px;width:113.4px;height:16.5px;border:1px solid #d6d6d6;box-sizing:border-box;background:#fff"></div>
<div class="t" style="left:64.25px;width:400px;text-align:center;top:68.69px;font-size:8.4px;color:#2a2a2a;font-weight:normal;transform:scaleX(0.9146);transform-origin:50% 0;-webkit-text-stroke:0.15px currentColor">Independance Day</div>
<div class="r" style="left:426px;top:62.2px;width:105.8px;height:19.1px;border:1px solid #d6d6d6;box-sizing:border-box;background:#fff"></div>
<div class="t" style="left:279.20px;width:400px;text-align:center;top:68.86px;font-size:8.2px;color:#2a2a2a;font-weight:normal;transform:scaleX(0.9538);transform-origin:50% 0;-webkit-text-stroke:0.15px currentColor">50</div>
<div class="r" style="left:207.4px;top:99.3px;width:113.4px;height:19.4px;border:1px solid #dadada;box-sizing:border-box;background:#fff"></div>
<div class="t" style="left:58.00px;width:400px;text-align:center;top:105.56px;font-size:8.2px;color:#2a2a2a;font-weight:normal;transform:scaleX(0.7236);transform-origin:50% 0;-webkit-text-stroke:0.15px currentColor">18</div>
<svg class="r" style="left:311.5px;top:106.8px" width="5" height="3"><path d="M0 0H4.2L2.1 2.6Z" fill="#444"/></svg>
<div class="r" style="left:426px;top:99.3px;width:105.8px;height:19.1px;border:1px solid #dadada;box-sizing:border-box;background:#fff"></div>
<div class="t" style="left:274.60px;width:400px;text-align:center;top:104.66px;font-size:8.2px;color:#2a2a2a;font-weight:normal;transform:scaleX(0.8973);transform-origin:50% 0;-webkit-text-stroke:0.15px currentColor">Cart</div>
<svg class="r" style="left:527px;top:108px" width="4" height="3"><path d="M0 0H3L1.5 2Z" fill="#666"/></svg>
<div class="r" style="left:191.7px;top:142.2px;width:7.5px;height:7.8px;border:1px solid #c4c4c4;box-sizing:border-box;background:#fff"></div>
<svg class="r" style="left:191.7px;top:142.2px" width="8" height="8"><path d="M1.8 4.2L3.3 5.8L6 2.2" stroke="#8a8a8a" stroke-width="0.9" fill="none"/></svg>
<div class="t" style="left:203.30px;top:142.96px;font-size:8.2px;color:#2e2e2e;font-weight:normal;transform:scaleX(0.9717);transform-origin:0 0;-webkit-text-stroke:0.15px currentColor">Mon</div>
<div class="r" style="left:235px;top:142.2px;width:7.5px;height:7.8px;border:1px solid #c4c4c4;box-sizing:border-box;background:#fff"></div>
<svg class="r" style="left:235px;top:142.2px" width="8" height="8"><path d="M1.8 4.2L3.3 5.8L6 2.2" stroke="#8a8a8a" stroke-width="0.9" fill="none"/></svg>
<div class="t" style="left:246.90px;top:142.96px;font-size:8.2px;color:#2e2e2e;font-weight:normal;transform:scaleX(0.9041);transform-origin:0 0;-webkit-text-stroke:0.15px currentColor">Tue</div>
<div class="r" style="left:274.2px;top:142.2px;width:7.5px;height:7.8px;border:1px solid #c4c4c4;box-sizing:border-box;background:#fff"></div>
<svg class="r" style="left:274.2px;top:142.2px" width="8" height="8"><path d="M1.8 4.2L3.3 5.8L6 2.2" stroke="#8a8a8a" stroke-width="0.9" fill="none"/></svg>
<div class="t" style="left:285.70px;top:142.96px;font-size:8.2px;color:#2e2e2e;font-weight:normal;transform:scaleX(0.9155);transform-origin:0 0;-webkit-text-stroke:0.15px currentColor">Wed</div>
<div class="r" style="left:316.7px;top:142.2px;width:7.5px;height:7.8px;border:1px solid #c4c4c4;box-sizing:border-box;background:#fff"></div>
<svg class="r" style="left:316.7px;top:142.2px" width="8" height="8"><path d="M1.8 4.2L3.3 5.8L6 2.2" stroke="#8a8a8a" stroke-width="0.9" fill="none"/></svg>
<div class="t" style="left:328.40px;top:142.96px;font-size:8.2px;color:#2e2e2e;font-weight:normal;transform:scaleX(0.8634);transform-origin:0 0;-webkit-text-stroke:0.15px currentColor">Thu</div>
<div class="r" style="left:356.5px;top:142.2px;width:7.5px;height:7.8px;border:1px solid #c4c4c4;box-sizing:border-box;background:#fff"></div>
<svg class="r" style="left:356.5px;top:142.2px" width="8" height="8"><path d="M1.8 4.2L3.3 5.8L6 2.2" stroke="#8a8a8a" stroke-width="0.9" fill="none"/></svg>
<div class="t" style="left:367.70px;top:142.96px;font-size:8.2px;color:#2e2e2e;font-weight:normal;transform:scaleX(0.8576);transform-origin:0 0;-webkit-text-stroke:0.15px currentColor">Fri</div>
<div class="r" style="left:392.3px;top:142.2px;width:7.5px;height:7.8px;border:1px solid #c4c4c4;box-sizing:border-box;background:#fff"></div>
<svg class="r" style="left:392.3px;top:142.2px" width="8" height="8"><path d="M1.8 4.2L3.3 5.8L6 2.2" stroke="#8a8a8a" stroke-width="0.9" fill="none"/></svg>
<div class="t" style="left:403.00px;top:142.96px;font-size:8.2px;color:#2e2e2e;font-weight:normal;transform:scaleX(0.8937);transform-origin:0 0;-webkit-text-stroke:0.15px currentColor">Sat</div>
<div class="r" style="left:429.6px;top:142.2px;width:7.5px;height:7.8px;border:1px solid #c4c4c4;box-sizing:border-box;background:#fff"></div>
<svg class="r" style="left:429.6px;top:142.2px" width="8" height="8"><path d="M1.8 4.2L3.3 5.8L6 2.2" stroke="#8a8a8a" stroke-width="0.9" fill="none"/></svg>
<div class="t" style="left:440.80px;top:142.96px;font-size:8.2px;color:#2e2e2e;font-weight:normal;transform:scaleX(0.8704);transform-origin:0 0;-webkit-text-stroke:0.15px currentColor">Sun</div>
<div class="r" style="left:207.4px;top:173.4px;width:112.6px;height:19px;border:1px solid #ebebeb;box-sizing:border-box;background:#fff"></div>
<div class="r" style="left:304.5px;top:173.4px;width:1px;height:19px;background:#f0f0f0"></div>
<svg class="r" style="left:307.0px;top:177px" width="11" height="11" viewBox="0 0 11 11"><rect x="0.8" y="2.2" width="9.4" height="8" fill="none" stroke="#777" stroke-width="1"/><rect x="0.8" y="2.2" width="9.4" height="2.2" fill="#777"/><path d="M3 0.5V3M8 0.5V3" stroke="#777" stroke-width="1.2"/><path d="M3.2 5V10M5.5 5V10M7.8 5V10" stroke="#888" stroke-width="0.8"/></svg>
<div class="r" style="left:425.7px;top:173.4px;width:106.1px;height:19px;border:1px solid #ebebeb;box-sizing:border-box;background:#fff"></div>
<div class="r" style="left:516.3px;top:173.4px;width:1px;height:19px;background:#f0f0f0"></div>
<svg class="r" style="left:518.8px;top:177px" width="11" height="11" viewBox="0 0 11 11"><rect x="0.8" y="2.2" width="9.4" height="8" fill="none" stroke="#777" stroke-width="1"/><rect x="0.8" y="2.2" width="9.4" height="2.2" fill="#777"/><path d="M3 0.5V3M8 0.5V3" stroke="#777" stroke-width="1.2"/><path d="M3.2 5V10M5.5 5V10M7.8 5V10" stroke="#888" stroke-width="0.8"/></svg>
<div class="t" style="left:210.70px;top:178.80px;font-size:7.8px;color:#333;font-weight:normal;transform:scaleX(0.8966);transform-origin:0 0;">07/04</div>
<div class="t" style="left:428.60px;top:178.80px;font-size:7.8px;color:#333;font-weight:normal;transform:scaleX(0.8914);transform-origin:0 0;">07/04</div>
<div class="r" style="left:207.4px;top:209.3px;width:113.2px;height:19.8px;border:1px solid #b4b4b4;box-sizing:border-box;background:#fff"></div>
<div class="t" style="left:212.00px;top:215.79px;font-size:8.4px;color:#222;font-weight:normal;transform:scaleX(0.9475);transform-origin:0 0;-webkit-text-stroke:0.15px currentColor">6:00 AM</div>
<svg class="r" style="left:311.6px;top:215.6px" width="7" height="7" viewBox="0 0 7 7"><circle cx="3.5" cy="3.5" r="2.7" fill="none" stroke="#888" stroke-width="0.8"/><path d="M3.5 1.8V3.6H4.8" stroke="#888" stroke-width="0.7" fill="none"/></svg>
<div class="r" style="left:425.7px;top:209.3px;width:106.1px;height:19.8px;border:1px solid #b4b4b4;box-sizing:border-box;background:#fff"></div>
<div class="t" style="left:430.30px;top:215.79px;font-size:8.4px;color:#222;font-weight:normal;transform:scaleX(0.9015);transform-origin:0 0;-webkit-text-stroke:0.15px currentColor">7:00 PM</div>
<svg class="r" style="left:522.8px;top:215.6px" width="7" height="7" viewBox="0 0 7 7"><circle cx="3.5" cy="3.5" r="2.7" fill="none" stroke="#888" stroke-width="0.8"/><path d="M3.5 1.8V3.6H4.8" stroke="#888" stroke-width="0.7" fill="none"/></svg>
<div class="r" style="left:257.5px;top:249px;width:28.3px;height:14.5px;border:1px solid #e2e2e2;border-radius:3px;box-sizing:border-box;background:#fff"></div>
<div class="r" style="left:271.8px;top:249px;width:14px;height:14.5px;background:#0b7a3f;border-radius:0 3px 3px 0"></div>
<svg class="r" style="left:261.5px;top:252px" width="8" height="8" viewBox="0 0 8 8"><path d="M1.2 4.2L3 6L6.8 1.8" stroke="#2f5e48" stroke-width="1.3" fill="none"/></svg>
<div class="r" style="left:257.5px;top:322.8px;width:28.3px;height:14.5px;border:1px solid #e2e2e2;border-radius:3px;box-sizing:border-box;background:#fff"></div>
<div class="r" style="left:271.8px;top:322.8px;width:14px;height:14.5px;background:#0b7a3f;border-radius:0 3px 3px 0"></div>
<svg class="r" style="left:261.5px;top:325.8px" width="8" height="8" viewBox="0 0 8 8"><path d="M1.2 4.2L3 6L6.8 1.8" stroke="#2f5e48" stroke-width="1.3" fill="none"/></svg>
<div class="r" style="left:472px;top:323px;width:28px;height:14.2px;border:1px solid #e4e4e4;border-radius:3px;box-sizing:border-box;background:#fff"></div>
<div class="r" style="left:472px;top:323px;width:14px;height:14.2px;background:#d3d3d3;border-radius:3px 0 0 3px"></div>
<svg class="r" style="left:489.5px;top:326.7px" width="7" height="7" viewBox="0 0 7 7"><path d="M1.5 1.5L5.5 5.5M5.5 1.5L1.5 5.5" stroke="#aaa" stroke-width="0.9"/></svg>
<div class="r" style="left:257.5px;top:453px;width:28px;height:14.2px;border:1px solid #e4e4e4;border-radius:3px;box-sizing:border-box;background:#fff"></div>
<div class="r" style="left:257.5px;top:453px;width:14px;height:14.2px;background:#d3d3d3;border-radius:3px 0 0 3px"></div>
<svg class="r" style="left:275.0px;top:456.7px" width="7" height="7" viewBox="0 0 7 7"><path d="M1.5 1.5L5.5 5.5M5.5 1.5L1.5 5.5" stroke="#aaa" stroke-width="0.9"/></svg>
<div class="r" style="left:426px;top:246.2px;width:106px;height:20.3px;border:1px solid #9a9a9a;box-sizing:border-box;background:#fff"></div>
<div class="t" style="left:429.30px;top:253.66px;font-size:6.9px;color:#808080;font-weight:normal;transform:scaleX(0.8702);transform-origin:0 0;">Display Sequence</div>
<div class="r" style="left:207.6px;top:283.1px;width:113.2px;height:20.3px;border:1px solid #9a9a9a;box-sizing:border-box;background:#fff"></div>
<div class="t" style="left:211.30px;top:290.66px;font-size:6.9px;color:#808080;font-weight:normal;transform:scaleX(0.9067);transform-origin:0 0;">Booking Window</div>
<div class="r" style="left:426px;top:283.1px;width:106px;height:20.3px;border:1px solid #9a9a9a;box-sizing:border-box;background:#fff"></div>
<div class="t" style="left:429.30px;top:290.66px;font-size:6.9px;color:#808080;font-weight:normal;transform:scaleX(0.9146);transform-origin:0 0;">Online Booking Window</div>
<div class="r" style="left:426px;top:450px;width:106px;height:20.3px;border:1px solid #9a9a9a;box-sizing:border-box;background:#fff"></div>
<div class="t" style="left:429.30px;top:457.56px;font-size:6.9px;color:#808080;font-weight:normal;transform:scaleX(0.8758);transform-origin:0 0;">Display Sequence in DistEngine</div>
<div class="r" style="left:210.2px;top:360.8px;width:323.8px;height:68px;border:1px solid #cfcfcf;box-sizing:border-box;background:#fff"></div>
<div class="r" style="left:95.5px;top:488px;width:452.5px;height:1px;background:#cfcfcf"></div>
<div class="r" style="left:279.4px;top:494.8px;width:39.4px;height:14.3px;border:1px solid #e6e6e6;box-sizing:border-box;background:#fff"></div>
<div class="t" style="left:98.25px;width:400px;text-align:center;top:498.30px;font-size:7.8px;color:#c8c8c8;font-weight:normal;transform:scaleX(0.8823);transform-origin:50% 0;">Back</div>
<div class="r" style="left:324.2px;top:494.8px;width:40.1px;height:14.3px;border:1px solid #cfcfcf;box-sizing:border-box;background:#fff"></div>
<div class="t" style="left:144.50px;width:400px;text-align:center;top:498.30px;font-size:7.8px;color:#222;font-weight:normal;transform:scaleX(0.9727);transform-origin:50% 0;-webkit-text-stroke:0.25px currentColor">Next</div>
<svg class="r" style="left:310px;top:455px" width="35" height="40" viewBox="0 0 35 40"><path d="M11.9 7.2L20 23.5" stroke="#ec3338" stroke-width="3.7" stroke-linecap="round"/><path d="M14 25.2L24.6 20.3L23.8 33.4Z" fill="#ec3338" stroke="#ec3338" stroke-width="1.2" stroke-linejoin="round"/></svg>
</body></html>
